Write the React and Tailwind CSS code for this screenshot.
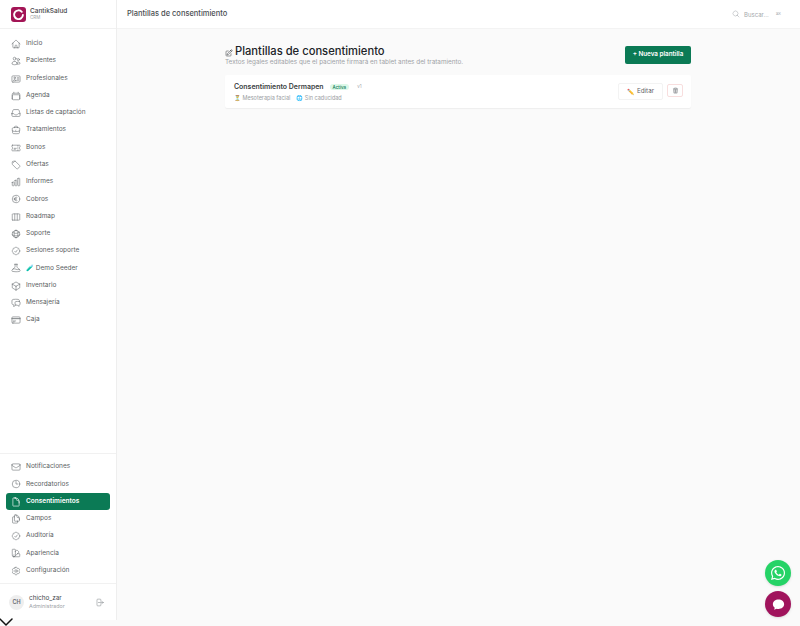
import {
  HiOutlineHome, HiOutlineUsers, HiOutlineIdentification, HiOutlineCalendar, HiOutlineInbox, HiOutlineBriefcase, HiOutlineTicket, HiOutlineTag, HiOutlineChartBar, HiOutlineCurrencyEuro, HiOutlineViewColumns, HiOutlineGlobeAlt, HiOutlineCheckBadge, HiOutlineBeaker, HiOutlineCube, HiOutlineChatBubbleLeftRight, HiOutlineCreditCard, HiOutlineEnvelope, HiOutlineClock, HiOutlineDocument, HiOutlineDocumentDuplicate, HiOutlineSwatch, HiOutlineCog6Tooth, HiOutlineArrowRightStartOnRectangle, HiOutlineMagnifyingGlass, HiOutlinePencilSquare, HiTrash,
} from "react-icons/hi2";
import { FaWhatsapp } from "react-icons/fa";
import { ChevronDown } from "lucide-react";

const mainNav = [
  [HiOutlineHome, "Inicio"],
  [HiOutlineUsers, "Pacientes"],
  [HiOutlineIdentification, "Profesionales"],
  [HiOutlineCalendar, "Agenda"],
  [HiOutlineInbox, "Listas de captación"],
  [HiOutlineBriefcase, "Tratamientos"],
  [HiOutlineTicket, "Bonos"],
  [HiOutlineTag, "Ofertas"],
  [HiOutlineChartBar, "Informes"],
  [HiOutlineCurrencyEuro, "Cobros"],
  [HiOutlineViewColumns, "Roadmap"],
  [HiOutlineGlobeAlt, "Soporte"],
  [HiOutlineCheckBadge, "Sesiones soporte"],
  [HiOutlineBeaker, "🧪 Demo Seeder"],
  [HiOutlineCube, "Inventario"],
  [HiOutlineChatBubbleLeftRight, "Mensajería"],
  [HiOutlineCreditCard, "Caja"],
];

const bottomNav = [
  [HiOutlineEnvelope, "Notificaciones"],
  [HiOutlineClock, "Recordatorios"],
  [HiOutlineDocument, "Consentimientos", true],
  [HiOutlineDocumentDuplicate, "Campos"],
  [HiOutlineCheckBadge, "Auditoría"],
  [HiOutlineSwatch, "Apariencia"],
  [HiOutlineCog6Tooth, "Configuración"],
];

function NavItem({ icon: Icon, label, active }) {
  return (
    <div
      className={`flex h-[16.5px] items-center gap-[5px] rounded-[3px] pl-[5px] text-[6.5px] ${
        active ? "bg-[#0b7a55] font-semibold text-white" : "text-[#5a5e62]"
      }`}
    >
      <Icon size={10} className={active ? "text-white" : "text-[#74787c]"} />
      <span>{label}</span>
    </div>
  );
}

export default function App() {
  return (
    <div className="relative flex h-[626px] w-[800px] overflow-hidden bg-[#fafafa] font-['Inter',sans-serif]">
      <aside className="flex h-[620px] w-[117px] shrink-0 flex-col border-r border-[#eeeeee] bg-white">
        <div className="flex h-[29px] items-center gap-[4px] border-b border-[#f1f1f1] px-[11px]">
          <svg viewBox="0 0 15 15" width="15" height="15">
            <rect width="15" height="15" rx="3" fill="#a31556" />
            <path d="M10.800 4.800A4.400 4.400 0 1 0 11.900 8" fill="none" stroke="white" strokeWidth="1.900" strokeLinecap="round" />
          </svg>
          <div className="flex flex-col pt-[1px] leading-none">
            <span className="text-[6.5px] font-medium text-[#3f4347]">CantikSalud</span>
            <span className="mt-[1.5px] text-[4.5px] text-[#a0a4a8]">CRM</span>
          </div>
        </div>

        <nav className="flex flex-col gap-[0.77px] px-[6px] pt-[6.75px]">
          {mainNav.map(([icon, label]) => (
            <NavItem key={label} icon={icon} label={label} />
          ))}
        </nav>

        <nav className="mt-auto flex flex-col gap-[0.77px] border-t border-[#f1f1f1] px-[6px] pt-[5px] pb-[4px]">
          {bottomNav.map(([icon, label, active]) => (
            <NavItem key={label} icon={icon} label={label} active={active} />
          ))}
        </nav>

        <div className="flex h-[37px] items-center gap-[5px] border-t border-[#f1f1f1] pl-[9px] pr-[12px]">
          <div className="flex h-[15px] w-[15px] items-center justify-center rounded-full bg-[#eeeeee] text-[5.5px] font-semibold text-[#666a6e]">
            CH
          </div>
          <div className="flex flex-1 flex-col leading-none">
            <span className="text-[6.4px] text-[#44484c]">chicho_zar</span>
            <span className="mt-[2px] text-[5.4px] text-[#a0a4a8]">Administrador</span>
          </div>
          <HiOutlineArrowRightStartOnRectangle size={9} className="text-[#8a8e92]" />
        </div>
      </aside>

      <div className="relative flex min-w-0 flex-1 flex-col">
        <header className="flex h-[29px] items-center justify-between border-b border-[#f3f3f3] bg-white pl-[10px] pr-[19px]">
          <span className="text-[7.5px] font-medium text-[#4a4e52]">Plantillas de consentimiento</span>
          <div className="flex items-center gap-[4px] text-[6px] text-[#a4a8ac]">
            <HiOutlineMagnifyingGlass size={8} />
            <span>Buscar...</span>
            <span className="ml-[3px] text-[3.2px]">⌘K</span>
          </div>
        </header>

        <main className="ml-[108px] w-[466px] pt-[15px]">
          <div className="flex items-center justify-between">
            <div>
              <h1 className="flex items-center gap-[2px] text-[11.2px] font-medium leading-[14px] text-[#202327]">
                <HiOutlinePencilSquare size={8} className="mt-[3px] text-[#33373b]" />
                <span>Plantillas de consentimiento</span>
              </h1>
              <p className="text-[6.36px] leading-[9px] text-[#9ea2a6]">
                Textos legales editables que el paciente firmará en tablet antes del tratamiento.
              </p>
            </div>
            <button className="mb-[1px] flex h-[18px] w-[66px] items-center justify-center rounded-[2px] bg-[#0b7a55] text-[6.3px] font-semibold text-white">
              + Nueva plantilla
            </button>
          </div>

          <div className="mt-[8px] flex h-[33px] items-center justify-between rounded-[2px] bg-white pl-[9px] pr-[8px] shadow-[0_1px_1px_rgba(0,0,0,0.05)]">
            <div className="pt-[2px]">
              <div className="flex h-[9px] items-center gap-[6px]">
                <span className="text-[6.95px] font-semibold text-[#3a3e42]">Consentimiento Dermapen</span>
                <span className="rounded-full bg-[#dcf8e8] px-[3px] py-[0.5px] text-[4.5px] font-medium leading-[5px] text-[#0b7a55]">Activa</span>
                <span className="ml-[2px] text-[4.5px] text-[#a4a8ac]">v1</span>
              </div>
              <div className="mt-[2px] flex h-[9px] items-center gap-[6px] text-[5.5px] text-[#9a9ea2]">
                <span>⏳ Mesoterapia facial</span>
                <span>🌐 Sin caducidad</span>
              </div>
            </div>
            <div className="flex items-start gap-[4px]">
              <button className="mt-[0.5px] flex h-[17px] w-[45px] items-center justify-center gap-[3px] rounded-[2px] border border-[#f3f3f3] text-[6.3px] text-[#5f6368]">
                <span className="text-[6px]">✏️</span> Editar
              </button>
              <button className="mt-[1px] flex h-[13px] w-[16px] items-center justify-center rounded-[2px] border border-[#f8dede]">
                <HiTrash size={7} className="text-[#a3a5a8]" />
              </button>
            </div>
          </div>
        </main>
      </div>

      <ChevronDown size={24} strokeWidth={1.5} className="absolute left-[-6px] top-[610px] text-[#111111]" />

      <button className="absolute bottom-[40px] left-[765px] flex h-[26px] w-[26px] items-center justify-center rounded-full bg-[#25d366] text-white shadow">
        <FaWhatsapp size={16} />
      </button>
      <button className="absolute bottom-[9px] left-[765px] flex h-[26px] w-[26px] items-center justify-center rounded-full bg-[#a0135c] shadow">
        <svg viewBox="0 0 24 24" width="15" height="15" fill="white">
          <path d="M12 4c5 0 9 3.200 9 7.500S17 19 12 19c-1 0-2-.1-3-.4L5 20.500l1-3.500c-1.800-1.400-3-3.300-3-5.500C3 7.200 7 4 12 4z" />
        </svg>
      </button>
    </div>
  );
}
